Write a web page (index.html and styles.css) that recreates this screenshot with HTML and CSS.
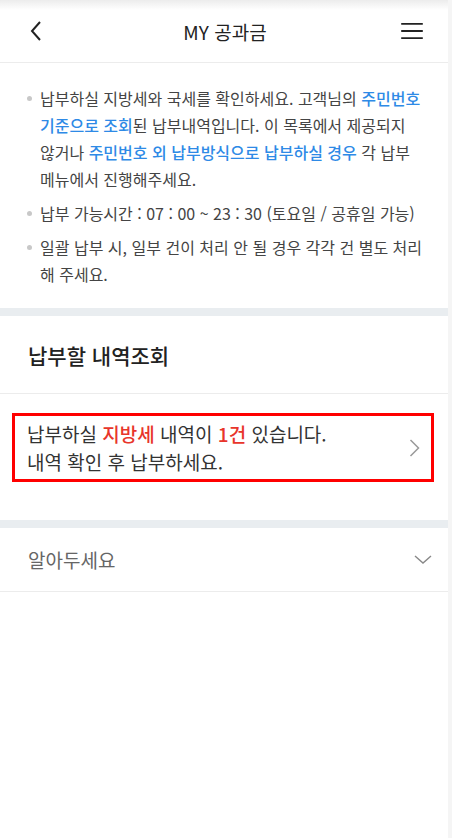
FILE: index.html
```html
<!DOCTYPE html>
<html lang="ko">
<head>
  <meta charset="utf-8">
  <title>MY 공과금</title>
  <link rel="stylesheet" href="styles.css">
</head>
<body>
  <div class="page">
    <header class="topbar">
      <button class="icon-btn back" aria-label="뒤로">
        <svg width="14" height="22" viewBox="0 0 14 22"><path d="M11 2 L3 11 L11 20" fill="none" stroke="#222" stroke-width="2"/></svg>
      </button>
      <h1 class="title">MY 공과금</h1>
      <button class="icon-btn menu" aria-label="메뉴">
        <svg width="26" height="20" viewBox="0 0 26 20"><path d="M1 2 H25 M1 10 H25 M1 18 H25" stroke="#222" stroke-width="2"/></svg>
      </button>
    </header>

    <!-- notice -->
    <ul class="notice">
      <li>납부하실 지방세와 국세를 확인하세요. 고객님의 <span class="blue">주민번호 기준으로 조회</span>된 납부내역입니다. 이 목록에서 제공되지 않거나 <span class="blue">주민번호 외 납부방식으로 납부하실 경우</span> 각 납부 메뉴에서 진행해주세요.</li>
      <li>납부 가능시간 : 07 : 00 ~ 23 : 30 (토요일 / 공휴일 가능)</li>
      <li>일괄 납부 시, 일부 건이 처리 안 될 경우 각각 건 별도 처리 해 주세요.</li>
    </ul>

    <div class="divider"></div>

    <section class="inquiry">
      <h2 class="section-title">납부할 내역조회</h2>
      <div class="result-wrap">
        <a class="result" href="#">
          <p>납부하실 <strong class="red">지방세</strong> 내역이 <strong class="red">1건</strong> 있습니다.<br>내역 확인 후 납부하세요.</p>
          <svg width="11" height="18" viewBox="0 0 11 18"><path d="M1.5 1 L9.5 9 L1.5 17" fill="none" stroke="#999" stroke-width="1.5"/></svg>
        </a>
      </div>
    </section>

    <div class="divider"></div>

    <div class="accordion">
      <span>알아두세요</span>
      <svg width="18" height="9" viewBox="0 0 18 9"><path d="M1 1 L9 8 L17 1" fill="none" stroke="#888" stroke-width="1.4"/></svg>
    </div>
  </div>
</body>
</html>
```

FILE: styles.css
```css
/* base */
html, body {
  margin: 0;
  padding: 0;
  background: #f5f5f5;
}

body {
  font-family: "Noto Sans CJK KR", "Noto Sans", sans-serif;
  color: #333;
  word-break: keep-all;
}

.page {
  width: 448px;
  min-height: 838px;
  background: #fff;
}

/* header */
.topbar {
  height: 63px;
  display: flex;
  align-items: center;
  justify-content: space-between;
  padding: 0 24px 0 24px;
  border-bottom: 1px solid #ececec;
  background: linear-gradient(#ececec, #fff 10px);
  box-sizing: border-box;
}

.icon-btn {
  background: none;
  border: none;
  padding: 0;
  width: 28px;
  height: 28px;
  display: flex;
  align-items: center;
  justify-content: center;
}

.back {
  justify-content: flex-start;
  padding-left: 5px;
}

.menu {
  margin-right: -2px;
}

.menu svg {
  height: 18px;
}

.title {
  margin: 0;
  font-size: 19px;
  font-weight: 400;
  color: #222;
}

/* notice list */
.notice {
  list-style: none;
  margin: 0;
  padding: 22px 20px 13px 40px;
  font-size: 16px;
  line-height: 27px;
  color: #444;
}

.notice li {
  position: relative;
  margin-bottom: 7px;
}

.notice li::before {
  content: "";
  position: absolute;
  left: -13px;
  top: 11px;
  width: 5px;
  height: 5px;
  border-radius: 50%;
  background: #c8c8c8;
}

.blue {
  color: #2e8ae6;
  font-weight: 500;
}

.divider {
  height: 8px;
  background: #e9edf0;
}

/* inquiry */
.section-title {
  margin: 0;
  padding: 0 28px;
  height: 77px;
  display: flex;
  align-items: center;
  font-size: 21px;
  font-weight: 500;
  color: #222;
  border-bottom: 1px solid #ececec;
}

.result-wrap {
  padding: 19px 14px 38px 12px;
}

.result {
  display: flex;
  align-items: center;
  justify-content: space-between;
  border: 3px solid #f00;
  padding: 0 11px 0 12px;
  height: 69px;
  box-sizing: border-box;
  text-decoration: none;
  color: #333;
}

.result p {
  margin: 0;
  font-size: 19px;
  line-height: 28px;
}

.red {
  color: #e8352b;
  font-weight: 500;
}

/* accordion */
.accordion {
  height: 64px;
  display: flex;
  align-items: center;
  justify-content: space-between;
  padding: 0 16px 0 28px;
  border-bottom: 1px solid #ececec;
  font-size: 19px;
  color: #666;
  box-sizing: border-box;
}
```
